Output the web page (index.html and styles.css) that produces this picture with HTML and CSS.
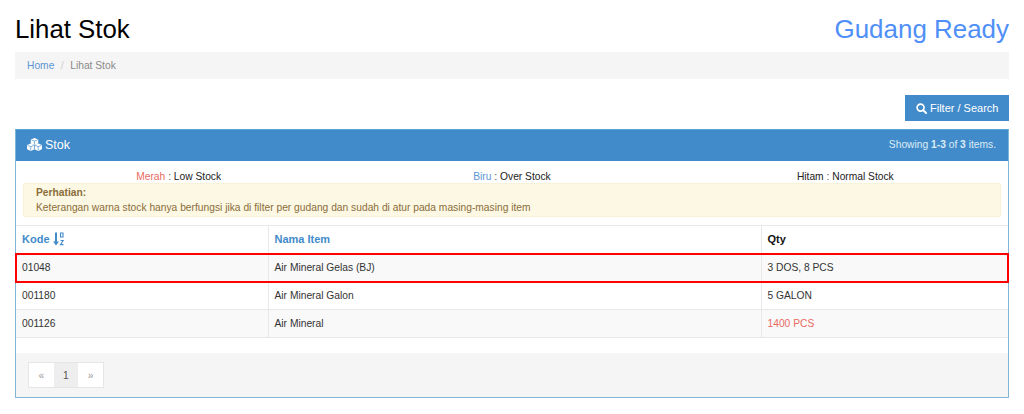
FILE: index.html
```html
<!DOCTYPE html>
<html lang="en">
<head>
  <meta charset="UTF-8">
  <title>Lihat Stok</title>
  <link rel="stylesheet" href="styles.css">
</head>
<body>
  <div class="page-head">
    <h1 class="page-title">Lihat Stok</h1>
    <div class="warehouse">Gudang Ready</div>
  </div>

  <div class="breadcrumb">
    <a href="#">Home</a>
    <span class="divider">/</span>
    <span class="current">Lihat Stok</span>
  </div>

  <div class="toolbar">
    <button class="btn-filter">
      <svg class="icon-search" viewBox="0 0 12 12" aria-hidden="true">
        <circle cx="5" cy="5" r="3.8" fill="none" stroke="#fff" stroke-width="1.8"/>
        <path d="M7.8 7.8L11 11" stroke="#fff" stroke-width="2.2" stroke-linecap="round"/>
      </svg>
      Filter / Search
    </button>
  </div>

  <div class="panel">
    <div class="panel-heading">
      <div class="panel-title">
        <svg class="icon-cubes" viewBox="0 0 16 14" aria-hidden="true">
          <path fill="#fff" d="M8 0L12 1.5V6L8 7.5L4 6V1.5Z"/>
          <path fill="#fff" d="M4 6L8 7.5V12L4 14L0 12V7.5Z"/>
          <path fill="#fff" d="M12 6L16 7.5V12L12 14L8 12V7.5Z"/>
          <path fill="none" stroke="#428bca" stroke-width="0.7" d="M4.6 2L8 3.3L11.4 2M8 3.3V7M0.6 8L4 9.3L7.4 8M4 9.3V13.4M8.6 8L12 9.3L15.4 8M12 9.3V13.4M8 7.5V12"/>
        </svg>
        Stok
      </div>
      <div class="summary">Showing <b>1-3</b> of <b>3</b> items.</div>
    </div>

    <div class="legend">
      <div><span class="text-red">Merah</span> <span class="sep">:</span> Low Stock</div>
      <div><span class="text-blue">Biru</span> <span class="sep">:</span> Over Stock</div>
      <div>Hitam <span class="sep">:</span> Normal Stock</div>
    </div>

    <div class="alert">
      <strong>Perhatian:</strong>
      <div>Keterangan warna stock hanya berfungsi jika di filter per gudang dan sudah di atur pada masing-masing item</div>
    </div>

    <table class="stock-table">
      <colgroup>
        <col class="col-code">
        <col class="col-name">
        <col class="col-qty">
      </colgroup>
      <thead>
        <tr>
          <th>
            <a href="#">Kode</a>
            <svg class="icon-sort" viewBox="0 0 11 14" aria-hidden="true">
              <path fill="#428bca" d="M2 0.5H4V9.5H6L3 13.5L0 9.5H2Z"/>
              <path fill="none" stroke="#428bca" stroke-width="1.1" d="M7.5 1H10V5H7.5ZM7.5 8.5H10.2L7.5 12.6H10.5"/>
            </svg>
          </th>
          <th><a href="#">Nama Item</a></th>
          <th>Qty</th>
        </tr>
      </thead>
      <tbody>
        <tr class="row-marked">
          <td>01048</td>
          <td>Air Mineral Gelas (BJ)</td>
          <td>3 DOS, 8 PCS</td>
        </tr>
        <tr>
          <td>001180</td>
          <td>Air Mineral Galon</td>
          <td>5 GALON</td>
        </tr>
        <tr>
          <td>001126</td>
          <td>Air Mineral</td>
          <td class="text-red">1400 PCS</td>
        </tr>
      </tbody>
    </table>

    <div class="panel-footer">
      <ul class="pagination">
        <li class="muted">«</li>
        <li class="active">1</li>
        <li class="muted">»</li>
      </ul>
    </div>
  </div>
</body>
</html>
```

FILE: styles.css
```css
:root {
  --primary: #428bca;
  --link-blue: #4f8ff7;
  --line: #e8e8e8;
  --red: #ea6a62;
}

* {
  box-sizing: border-box;
}

body {
  margin: 0;
  padding: 0 15px;
  font-family: "Liberation Sans", Arial, sans-serif;
  font-size: 10.25px;
  color: #333;
  background-color: #fff;
}

a {
  color: var(--primary);
  text-decoration: none;
}

.page-head {
  display: flex;
  justify-content: space-between;
  align-items: center;
  height: 52px;
  padding-top: 6px;
}

.page-title {
  margin: 0;
  font-size: 25.8px;
  font-weight: normal;
  color: #000;
}

.warehouse {
  font-size: 25.95px;
  color: var(--link-blue);
}

.breadcrumb {
  display: flex;
  align-items: center;
  height: 27px;
  padding: 0 12px 1px;
  background-color: #f5f5f5;
}

.breadcrumb a {
  color: #5b96d2;
}

.breadcrumb .divider {
  margin: 0 6.5px;
  color: #ccc;
}

.breadcrumb .current {
  color: #8a8a8a;
}

.toolbar {
  display: flex;
  justify-content: flex-end;
  margin-top: 16px;
  margin-bottom: 8px;
}

.btn-filter {
  display: flex;
  align-items: center;
  gap: 3px;
  width: 104px;
  height: 26px;
  padding: 0 0 0 11px;
  border: none;
  font-family: inherit;
  font-size: 11px;
  color: #fff;
  background-color: var(--primary);
}

.icon-search {
  width: 11px;
  height: 11px;
}

.panel {
  height: 269px;
  border: 1px solid #7fb6d8;
  border-top-color: #5ba3d3;
}

.panel-heading {
  display: flex;
  justify-content: space-between;
  align-items: center;
  height: 31px;
  padding: 0 12px 2px 11px;
  color: #fff;
  background-color: var(--primary);
}

.panel-title {
  display: flex;
  align-items: center;
  gap: 3px;
  font-size: 12.5px;
}

.icon-cubes {
  width: 15px;
  height: 13px;
}

.summary {
  color: #dcebf6;
}

.legend {
  display: grid;
  grid-template-columns: repeat(3, 1fr);
  margin: 0 -4px;
  padding-top: 9px;
  line-height: 13px;
  text-align: center;
  color: #222;
}

.legend .sep {
  color: #555;
}

.text-red {
  color: var(--red);
}

.text-blue {
  color: #5b96d2;
}

.alert {
  height: 34px;
  margin: 0 7px 8px;
  padding: 1px 12px;
  line-height: 15px;
  color: #8a6d3b;
  background-color: #fcf8e3;
  border: 1px solid #f8f2d8;
  border-radius: 2px;
}

.stock-table {
  width: 100%;
  border-collapse: collapse;
  table-layout: fixed;
}

.col-code {
  width: 252px;
}

.col-name {
  width: 493px;
}

.stock-table th,
.stock-table td {
  padding: 0 6px;
  text-align: left;
  border: 1px solid var(--line);
}

.stock-table th:first-child,
.stock-table td:first-child {
  border-left: none;
}

.stock-table th:last-child,
.stock-table td:last-child {
  border-right: none;
}

.stock-table th {
  height: 28px;
  padding-bottom: 2px;
  font-size: 11px;
  color: #111;
}

.stock-table td {
  height: 28px;
}

.stock-table tbody tr:nth-child(odd) {
  background-color: #f9f9f9;
}

.row-marked {
  outline: 2px solid #f00;
  outline-offset: -1px;
}

.icon-sort {
  width: 11px;
  height: 14px;
  vertical-align: -3px;
}

.panel-footer {
  height: 44px;
  margin-top: 15px;
  padding: 9px 12px;
  background-color: #f5f5f5;
}

.pagination {
  display: flex;
  width: fit-content;
  margin: 0;
  padding: 0;
  list-style: none;
  border: 1px solid #e6e6e6;
  background-color: #fff;
}

.pagination li {
  display: flex;
  justify-content: center;
  align-items: center;
  width: 24.6px;
  height: 24px;
}

.pagination .muted {
  color: #999;
}

.pagination .active {
  color: #555;
  background-color: #eee;
}
```
